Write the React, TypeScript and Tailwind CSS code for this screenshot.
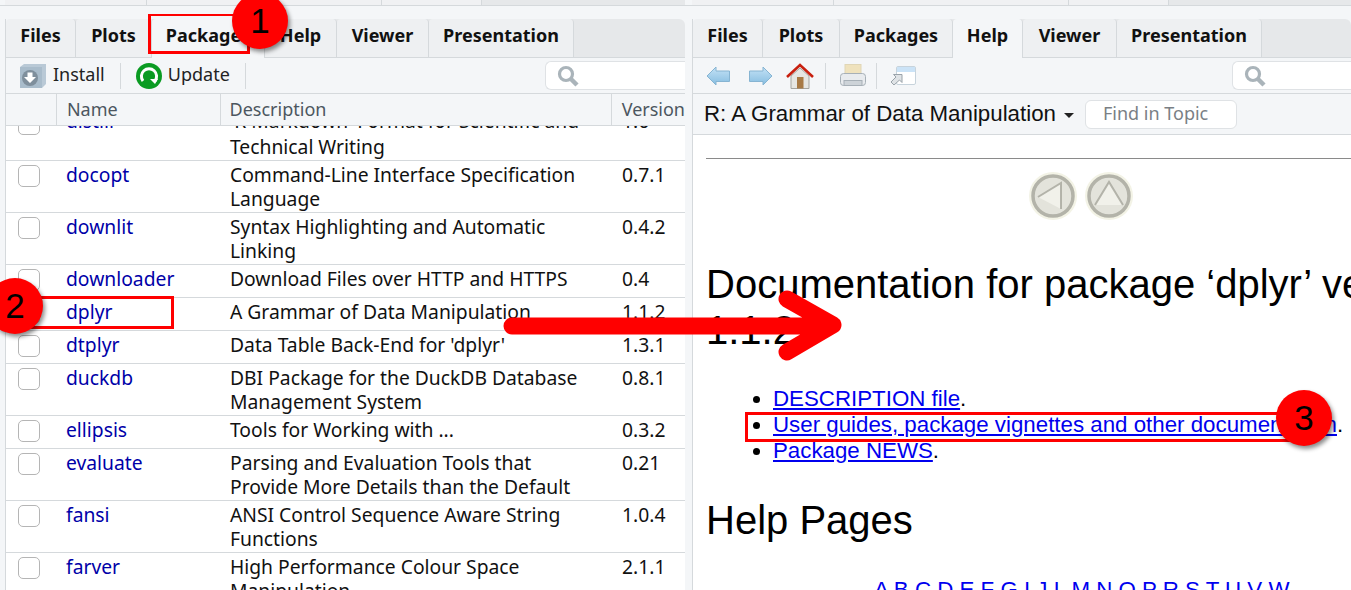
const font = "font-['Noto_Sans','Open_Sans',sans-serif]";

const rows = [
  { name: "distill", desc: ["'R Markdown' Format for Scientific and", "Technical Writing"], ver: "1.6" },
  { name: "docopt", desc: ["Command-Line Interface Specification", "Language"], ver: "0.7.1" },
  { name: "downlit", desc: ["Syntax Highlighting and Automatic", "Linking"], ver: "0.4.2" },
  { name: "downloader", desc: ["Download Files over HTTP and HTTPS"], ver: "0.4" },
  { name: "dplyr", desc: ["A Grammar of Data Manipulation"], ver: "1.1.2" },
  { name: "dtplyr", desc: ["Data Table Back-End for 'dplyr'"], ver: "1.3.1" },
  { name: "duckdb", desc: ["DBI Package for the DuckDB Database", "Management System"], ver: "0.8.1" },
  { name: "ellipsis", desc: ["Tools for Working with ..."], ver: "0.3.2" },
  { name: "evaluate", desc: ["Parsing and Evaluation Tools that", "Provide More Details than the Default"], ver: "0.21" },
  { name: "fansi", desc: ["ANSI Control Sequence Aware String", "Functions"], ver: "1.0.4" },
  { name: "farver", desc: ["High Performance Colour Space", "Manipulation"], ver: "2.1.1" },
];

function Tabs({ active, widths }: { active: string; widths: number[] }) {
  const names = ["Files", "Plots", "Packages", "Help", "Viewer", "Presentation"];
  return (
    <div className="flex h-[39px] rounded-t-md border-b border-[#d5d9dc] bg-[#e6e8ea]">
      {names.map((n, i) => (
        <div
          key={n}
          style={{ width: widths[i] }}
          className={
            n === active
              ? "flex items-center justify-center pb-[6px] h-[39px] bg-[#f4f6f8] border-r border-[#d5d9dc] rounded-t text-[18px] font-bold text-[#111]"
              : "flex items-center justify-center pb-[5px] h-[38px] bg-[#eef0f2] border-r border-[#d5d9dc] rounded-t text-[18px] font-bold text-[#111]"
          }
        >
          {n}
        </div>
      ))}
    </div>
  );
}

function SearchBox({ className }: { className: string }) {
  return (
    <div className={`flex items-center ml-auto h-[29px] pl-[11px] bg-white border border-[#dfe2e5] border-r-0 rounded-l-md ${className}`}>
      <svg width="22" height="22" viewBox="0 0 22 22" fill="none" stroke="#aab4ba">
        <circle cx="9" cy="9" r="6.5" strokeWidth="3.2" />
        <path d="M14 14 L20 20" strokeWidth="4.5" />
      </svg>
    </div>
  );
}

function Sep() {
  return <div className="w-px h-[26px] bg-[#d5d9dc]" />;
}

function InstallIcon() {
  return (
    <svg width="28" height="26" viewBox="0 0 28 26">
      <path d="M1 4 L5 1 H27 V21 L23 25 H1 Z" fill="#b9c9d6" />
      <rect x="1" y="4" width="22" height="21" fill="#a9bccb" />
      <circle cx="11" cy="15" r="8" fill="#7f8f9c" />
      <path d="M8.5 9.5 H13.5 V14 H17 L11 20 L5 14 H8.5 Z" fill="#fff" />
    </svg>
  );
}

function UpdateIcon() {
  return (
    <svg width="26" height="26" viewBox="0 0 26 26">
      <circle cx="13" cy="13" r="13" fill="#0a9b22" />
      <path d="M7 18 A7.6 7.6 0 1 1 19 18" fill="none" stroke="#fff" strokeWidth="3" />
      <path d="M14 16 H22 L19 21 Z" fill="#fff" />
    </svg>
  );
}

function NavArrow({ flip, className }: { flip?: boolean; className?: string }) {
  return (
    <svg width="24" height="20" viewBox="0 0 24 20" className={`${flip ? "-scale-x-100" : ""} ${className ?? ""}`}>
      <defs>
        <linearGradient id="navArrowFill" x1="0" y1="0" x2="0" y2="1">
          <stop offset="0" stopColor="#c4e2f6" />
          <stop offset="1" stopColor="#86bde0" />
        </linearGradient>
      </defs>
      <path d="M1 10 L10 1 V5 H23.5 V15.5 H10 V19 Z" fill="url(#navArrowFill)" stroke="#86b4d2" strokeLinejoin="round" />
    </svg>
  );
}

function HomeIcon() {
  return (
    <svg width="28" height="26" viewBox="0 0 28 26" className="ml-[13px]">
      <path d="M5 13 L14 5 L23 13 V25.5 H5 Z" fill="#e6e6e2" stroke="#a5a5a0" />
      <rect x="11" y="14" width="6.5" height="11.5" fill="#a87a45" />
      <path d="M1 14 L14 2 L27 14" fill="none" stroke="#c8200f" strokeWidth="2.6" />
    </svg>
  );
}

function PrintIcon() {
  return (
    <svg width="26" height="23" viewBox="0 0 26 23" className="ml-[14px]">
      <rect x="5" y="0.5" width="16" height="11" fill="#efe2bd" stroke="#e0d6b6" />
      <rect x="0.5" y="9.5" width="25" height="12" rx="3" fill="#e8ebee" stroke="#a7b0b7" />
      <rect x="4" y="16.5" width="18" height="5" fill="#cdd3d8" stroke="#a7b0b7" />
    </svg>
  );
}

function PopoutIcon() {
  return (
    <svg width="26" height="19" viewBox="0 0 26 19" className="ml-[13px]">
      <rect x="6.5" y="0.5" width="19" height="18" rx="1.5" fill="#fff" stroke="#c7d3dc" />
      <path d="M7 1 H25 V6 H7 Z" fill="#cbe3f7" />
      <path d="M1 16 L6 11 L3.5 8.5 H12 V16.5 L9.5 14 L4 19 Z" fill="#dfe3e6" stroke="#9aa3aa" />
    </svg>
  );
}

function PkgRow({ row, first }: { row: (typeof rows)[number]; first: boolean }) {
  // the first row is scrolled almost out of view: only the foot of its top line shows
  const lift = first ? "-translate-y-[2px]" : "";
  return (
    <div className={`flex border-b border-[#d5d9dc] min-h-[33px] pb-px ${first ? "-mt-[17px]" : ""}`}>
      <div className="w-[50px] shrink-0 pl-[12px] pt-[4px]">
        <div className="w-[22px] h-[22px] rounded-[5px] border border-[#b5b5b5] bg-white" />
      </div>
      <div className={`w-[164px] shrink-0 pl-[10px] pt-[2px] text-[#0000a8] leading-6 ${lift}`}>{row.name}</div>
      <div className="w-[391px] shrink-0 pl-[10px] pt-[2px] text-[#111] leading-6 whitespace-nowrap">
        {row.desc.map((d, i) => (
          <div key={d} className={i === 0 ? lift : ""}>{d}</div>
        ))}
      </div>
      <div className={`pl-[11px] pt-[2px] text-[#111] leading-6 ${lift}`}>{row.ver}</div>
    </div>
  );
}

function PackagesPane() {
  return (
    <div className={`w-[680px] shrink-0 flex flex-col border-l border-[#d5d9dc] ${font} text-[18px]`}>
      <Tabs active="Packages" widths={[70, 76, 113, 72, 92, 145]} />
      <div className="flex items-center h-[36px] shrink-0 bg-[#f4f6f8] border-b border-[#d5d9dc] pl-[13px] gap-[7px] text-[#222]">
        <InstallIcon />
        <span className="mr-2 -ml-px pb-[2px]">Install</span>
        <Sep />
        <div className="ml-2"><UpdateIcon /></div>
        <span className="mr-2 -ml-px pb-[2px]">Update</span>
        <Sep />
        <SearchBox className="w-[140px]" />
      </div>
      <div className="relative z-10 flex h-[32px] shrink-0 items-center bg-[#f4f6f8] border-b border-[#d5d9dc] text-[#4c5660]">
        <div className="w-[50px] h-full" />
        <div className="w-[164px] h-full border-l border-[#d5d9dc] pl-[10px] leading-[30px]">Name</div>
        <div className="w-[392px] h-full border-l border-[#d5d9dc] pl-[9px] leading-[30px]">Description</div>
        <div className="h-full border-l border-[#d5d9dc] pl-[10px] leading-[30px]">Version</div>
      </div>
      <div className="flex-1 overflow-hidden bg-white text-[19.3px]">
        {rows.map((r, i) => (
          <PkgRow key={r.name} row={r} first={i === 0} />
        ))}
      </div>
    </div>
  );
}

function HelpPane() {
  return (
    <div className="flex-1 min-w-0 flex flex-col border-l border-[#d5d9dc]">
      <div className={font}>
        <Tabs active="Help" widths={[70, 77, 113, 70, 94, 145]} />
        <div className="flex items-center h-[36px] bg-[#f4f6f8] border-b border-[#d5d9dc] pl-[13px]">
          <NavArrow />
          <NavArrow flip className="ml-[19px]" />
          <HomeIcon />
          <div className="ml-[11px]"><Sep /></div>
          <PrintIcon />
          <div className="ml-[10px]"><Sep /></div>
          <PopoutIcon />
          <SearchBox className="w-[119px]" />
        </div>
      </div>
      <div className="flex items-center h-[41px] shrink-0 bg-[#f4f6f8] border-b border-[#d5d9dc] pl-[11px] font-['Liberation_Sans',sans-serif] text-[22.3px] text-[#111]">
        R: A Grammar of Data Manipulation
        <span className="ml-[8px] mt-[2px] w-0 h-0 border-x-[5px] border-x-transparent border-t-[5px] border-t-[#222]" />
        <div className={`${font} ml-[11px] flex items-center w-[152px] h-[29px] pl-[17px] pb-[2px] bg-white border border-[#dfe2e5] rounded-md text-[18px] text-[#7a7f85]`}>
          Find in Topic
        </div>
      </div>
      <div className="flex-1 overflow-hidden bg-white font-['Liberation_Sans',sans-serif] text-black">
        <div className="w-[900px] pl-[13px] pt-[23px]">
          <div className="h-px bg-[#8a8a8a]" />
          <div className="flex justify-center gap-[8px] mt-[13px] pl-[18px] w-[731px]">
            <NavDisc dir="left" />
            <NavDisc dir="up" />
          </div>
          <h2 className="mt-[41px] text-[40px] leading-[46px] w-[800px]">
            Documentation for package ‘dplyr’ version 1.1.2
          </h2>
          <ul className="mt-[33px] list-disc pl-[67px] text-[22.3px] leading-[26px]">
            <li><a className="text-[#0000ee] underline">DESCRIPTION file</a>.</li>
            <li className="whitespace-nowrap"><a className="text-[#0000ee] underline">User guides, package vignettes and other documentation</a>.</li>
            <li><a className="text-[#0000ee] underline">Package NEWS</a>.</li>
          </ul>
          <h2 className="mt-[33px] text-[40px] leading-[46px]">Help Pages</h2>
          <p className="mt-[34px] pl-[168px] text-[22.3px] leading-[26px] text-[#0000ee] underline whitespace-nowrap">
            A B C D E F G I J L M N O P R S T U V W
          </p>
        </div>
      </div>
    </div>
  );
}

function NavDisc({ dir }: { dir: "left" | "up" }) {
  return (
    <svg width="48" height="48" viewBox="0 0 48 48">
      <circle cx="24" cy="24" r="24" fill="#f3f3e6" />
      <circle cx="24" cy="24" r="20" fill="#e3e3db" stroke="#b3b3a9" strokeWidth="3.5" />
      {dir === "left" ? (
        <>
          <path d="M9 25 L32 11 V37 Z" fill="#f1f1ea" />
          <path d="M9 25 L32 11 V37" fill="none" stroke="#a5a59b" strokeWidth="2" strokeOpacity="0.8" />
        </>
      ) : (
        <>
          <path d="M24 10 L38 33 H10 Z" fill="#f1f1ea" />
          <path d="M10 33 L24 10 L38 33" fill="none" stroke="#a5a59b" strokeWidth="2" strokeOpacity="0.8" />
        </>
      )}
    </svg>
  );
}

function Badge({ n, className }: { n: string; className: string }) {
  return (
    <div className={`absolute w-14 h-14 rounded-full bg-[#ff0000] flex items-center justify-center text-[35px] text-black font-['Liberation_Sans',sans-serif] shadow-[2px_3px_4px_rgba(0,0,0,0.45)] ${className}`}>
      {n}
    </div>
  );
}

export default function App() {
  return (
    <div className="relative w-[1351px] h-[590px] overflow-hidden bg-[#f4f6f8]">
      <div className="flex h-[6px] border-b border-[#d5d9dc]">
        <div className="w-[142px] ml-[5px] bg-[#f0f1f3] border-r border-[#d5d9dc]" />
        <div className="w-[235px] bg-[#f0f1f3] border-r border-[#d5d9dc]" />
        <div className="w-[100px] bg-[#f0f1f3] border-r border-[#d5d9dc]" />
        <div className="w-[203px] bg-[#e6e8ea]" />
        <div className="w-[142px] ml-[7px] bg-[#f0f1f3] border-r border-[#d5d9dc]" />
        <div className="w-[235px] bg-[#f0f1f3] border-r border-[#d5d9dc]" />
        <div className="w-[100px] bg-[#f0f1f3] border-r border-[#d5d9dc]" />
        <div className="flex-1 bg-[#e6e8ea]" />
      </div>
      <div className="flex pt-[13px] pl-[5px] h-[584px]">
        <PackagesPane />
        <div className="w-[7px] shrink-0" />
        <HelpPane />
      </div>

      {/* annotations */}
      <div className="absolute left-[148px] top-[14px] w-[102px] h-[40px] border-[3px] border-[#ff0000] border-t-[2px]" />
      <div className="absolute left-[30px] top-[296px] w-[144px] h-[33px] border-[3px] border-[#ff0000]" />
      <div className="absolute left-[745px] top-[412px] w-[560px] h-[30px] border-[3px] border-[#ff0000] border-r-0" />
      <Badge n="1" className="left-[232px] top-[-7px]" />
      <Badge n="2" className="left-[-13px] top-[278px]" />
      <Badge n="3" className="left-[1276px] top-[390px]" />
      <svg className="absolute left-[500px] top-[290px]" width="350" height="75" viewBox="0 0 350 75">
        <path d="M12 36 H330 M287 9 L333 35 L287 62" fill="none" stroke="#ff0000" strokeWidth="17" strokeLinecap="round" strokeLinejoin="round" />
      </svg>
    </div>
  );
}
